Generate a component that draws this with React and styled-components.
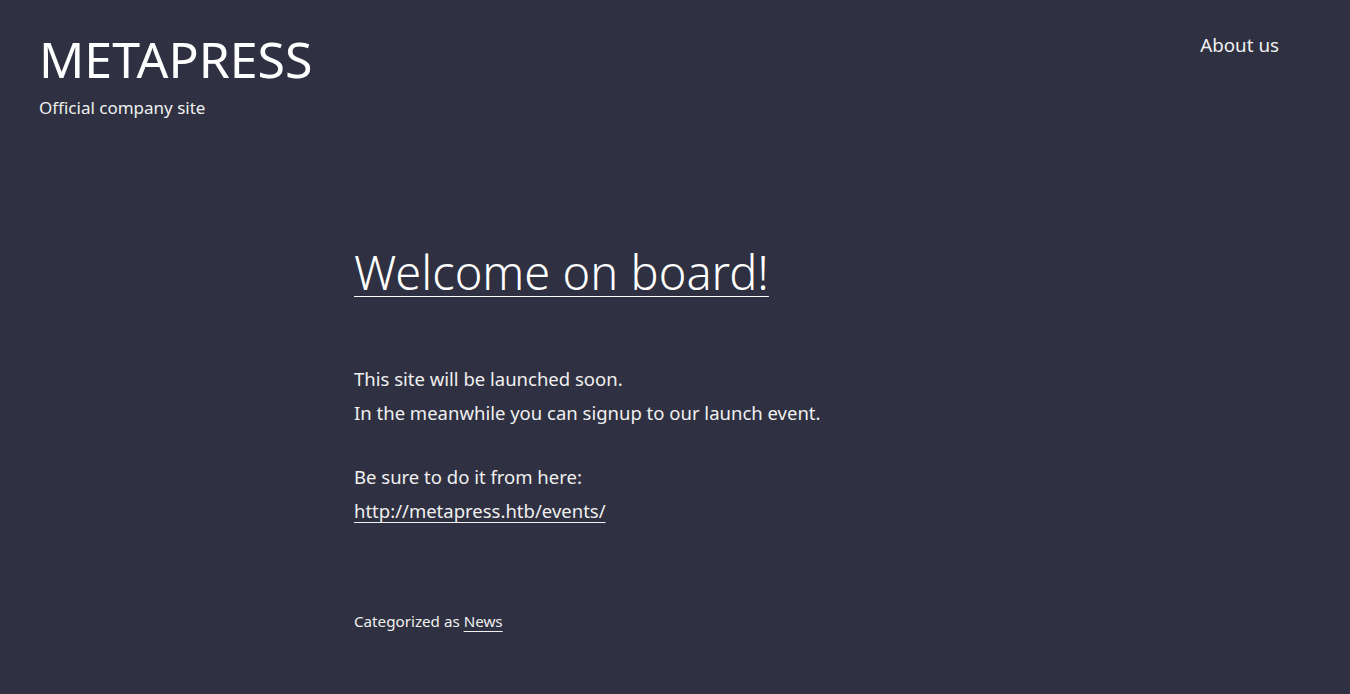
import styled, { createGlobalStyle } from "styled-components";

const Global = createGlobalStyle`
  html, body {
    margin: 0;
    padding: 0;
    background: #2f3041;
  }
  body {
    font-family: "Noto Sans", "Open Sans", sans-serif;
    color: #f0f0f0;
  }
`;

const Page = styled.div`
  min-height: 694px;
  background: #2f3041;
  display: flex;
  flex-direction: column;
`;

const Header = styled.header`
  display: flex;
  justify-content: space-between;
  align-items: flex-start;
  padding: 28px 71px 0 39px;
`;

const Branding = styled.div`
  display: flex;
  flex-direction: column;
`;

const SiteTitle = styled.h1`
  margin: 0;
  font-size: 50px;
  font-weight: 400;
  line-height: 62px;
  color: #ffffff;
`;

const Tagline = styled.p`
  margin: 6px 0 0;
  font-size: 17px;
  line-height: 24px;
`;

const NavLink = styled.a`
  margin-top: 2px;
  font-size: 18.8px;
  line-height: 30px;
  color: #f0f0f0;
  text-decoration: none;
`;

const Article = styled.article`
  width: 642px;
  padding-top: 120px;
  margin-left: 354px;
`;

const Heading = styled.h2`
  margin: 0;
  font-size: 47px;
  font-weight: 300;
  line-height: 64px;

  a {
    color: #ffffff;
    text-decoration: underline;
    text-decoration-thickness: 1px;
    text-underline-offset: 6px;
  }
`;

const Body = styled.div`
  margin-top: 58px;
  font-size: 18.5px;
  line-height: 34px;

  p {
    margin: 0 0 30px;
  }

  a {
    color: #f0f0f0;
    text-decoration-thickness: 1px;
    text-underline-offset: 4px;
  }
`;

const Footer = styled.footer`
  margin-top: 81px;
  font-size: 15.2px;
  line-height: 24px;

  a {
    color: #f0f0f0;
    text-decoration-thickness: 1px;
    text-underline-offset: 4px;
  }
`;

export default function App() {
  return (
    <Page>
      <Global />
      <Header>
        <Branding>
          <SiteTitle>METAPRESS</SiteTitle>
          <Tagline>Official company site</Tagline>
        </Branding>
        <NavLink href="#">About us</NavLink>
      </Header>
      <Article>
        <Heading>
          <a href="#">Welcome on board!</a>
        </Heading>
        <Body>
          <p>
            This site will be launched soon.
            <br />
            In the meanwhile you can signup to our launch event.
          </p>
          <p>
            Be sure to do it from here:
            <br />
            <a href="#">http://metapress.htb/events/</a>
          </p>
        </Body>
        <Footer>
          Categorized as <a href="#">News</a>
        </Footer>
      </Article>
    </Page>
  );
}
